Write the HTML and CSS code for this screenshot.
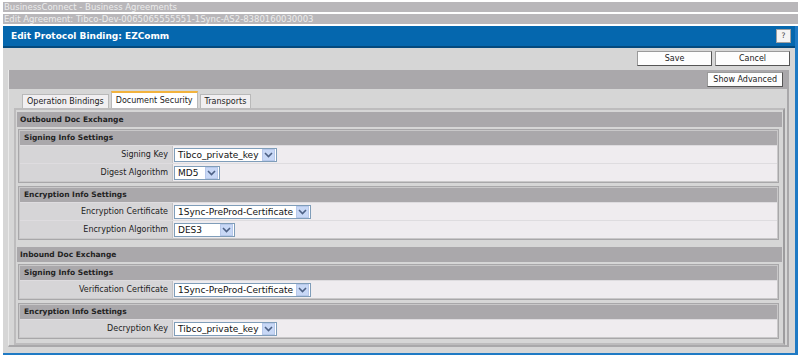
FILE: index.html
```html
<!DOCTYPE html>
<html lang="en">

<head>
    <meta charset="UTF-8">
    <title>Edit Protocol Binding</title>
    <link rel="stylesheet" href="styles.css">
</head>

<body>
    <div class="crumb">BusinessConnect - Business Agreements</div>
    <div class="crumb">Edit Agreement: Tibco-Dev-0065065555551-1Sync-AS2-8380160030003</div>

    <div class="dialog">
        <div class="titlebar">
            <span class="title">Edit Protocol Binding: EZComm</span>
            <span class="help">?</span>
        </div>

        <div class="actions">
            <span class="btn wide">Save</span>
            <span class="btn wide">Cancel</span>
        </div>

        <div class="panel">
            <div class="advbar">
                <span class="btn">Show Advanced</span>
            </div>

            <div class="tabs">
                <span class="tab">Operation Bindings</span>
                <span class="tab active">Document Security</span>
                <span class="tab">Transports</span>
            </div>

            <div class="page">
                <div class="group">
                    <div class="group-head">Outbound Doc Exchange</div>
                    <div class="group-body">
                        <div class="section">
                            <div class="section-head">Signing Info Settings</div>
                            <div class="row">
                                <div class="label">Signing Key</div>
                                <div class="value">
                                    <span class="select w-key">Tibco_private_key<span class="arrow"><svg width="9" height="6" viewBox="0 0 9 6"><path d="M1 1 L4.5 4.5 L8 1" fill="none" stroke="#4d6185" stroke-width="1.6"/></svg></span></span>
                                </div>
                            </div>
                            <div class="row">
                                <div class="label">Digest Algorithm</div>
                                <div class="value">
                                    <span class="select w-md5">MD5<span class="arrow"><svg width="9" height="6" viewBox="0 0 9 6"><path d="M1 1 L4.5 4.5 L8 1" fill="none" stroke="#4d6185" stroke-width="1.6"/></svg></span></span>
                                </div>
                            </div>
                        </div>

                        <div class="section">
                            <div class="section-head">Encryption Info Settings</div>
                            <div class="row">
                                <div class="label">Encryption Certificate</div>
                                <div class="value">
                                    <span class="select w-cert">1Sync-PreProd-Certificate<span class="arrow"><svg width="9" height="6" viewBox="0 0 9 6"><path d="M1 1 L4.5 4.5 L8 1" fill="none" stroke="#4d6185" stroke-width="1.6"/></svg></span></span>
                                </div>
                            </div>
                            <div class="row">
                                <div class="label">Encryption Algorithm</div>
                                <div class="value">
                                    <span class="select w-des">DES3<span class="arrow"><svg width="9" height="6" viewBox="0 0 9 6"><path d="M1 1 L4.5 4.5 L8 1" fill="none" stroke="#4d6185" stroke-width="1.6"/></svg></span></span>
                                </div>
                            </div>
                        </div>
                    </div>
                </div>

                <div class="group">
                    <div class="group-head">Inbound Doc Exchange</div>
                    <div class="group-body">
                        <div class="section">
                            <div class="section-head">Signing Info Settings</div>
                            <div class="row">
                                <div class="label">Verification Certificate</div>
                                <div class="value">
                                    <span class="select w-cert">1Sync-PreProd-Certificate<span class="arrow"><svg width="9" height="6" viewBox="0 0 9 6"><path d="M1 1 L4.5 4.5 L8 1" fill="none" stroke="#4d6185" stroke-width="1.6"/></svg></span></span>
                                </div>
                            </div>
                        </div>

                        <div class="section">
                            <div class="section-head">Encryption Info Settings</div>
                            <div class="row">
                                <div class="label">Decryption Key</div>
                                <div class="value">
                                    <span class="select w-key">Tibco_private_key<span class="arrow"><svg width="9" height="6" viewBox="0 0 9 6"><path d="M1 1 L4.5 4.5 L8 1" fill="none" stroke="#4d6185" stroke-width="1.6"/></svg></span></span>
                                </div>
                            </div>
                        </div>
                    </div>
                </div>
            </div>
        </div>
    </div>
</body>

</html>
```

FILE: styles.css
```css
body {
    margin: 0;
    padding-top: 2px;
    background: #ffffff;
    font-family: "DejaVu Sans", Verdana, sans-serif;
    font-size: 8px;
    color: #222;
}

.crumb {
    height: 10px;
    line-height: 10px;
    margin: 0 0 2px 3px;
    padding-left: 1px;
    background: #b9b7ba;
    color: #ececec;
    font-size: 8.5px;
    white-space: nowrap;
}

.dialog {
    margin-left: 3px;
    background: #d6d6d6;
    border-right: 3px solid #1f7ac4;
    border-bottom: 2px solid #1f7ac4;
    padding-bottom: 6px;
}

.titlebar {
    height: 20px;
    background: #0567ae;
    border-bottom: 2px solid #044a7e;
    display: flex;
    align-items: center;
    justify-content: space-between;
    padding: 0 4px 0 8px;
}

.title {
    color: #ffffff;
    font-weight: bold;
    font-size: 9px;
}

.help {
    width: 13px;
    height: 12px;
    line-height: 12px;
    text-align: center;
    background: #f4f4f4;
    border: 1px solid #a0a0a0;
    color: #444;
    font-size: 7.5px;
}

.actions {
    display: flex;
    justify-content: flex-end;
    gap: 3px;
    padding: 3px 5px 0 0;
}

.btn {
    display: inline-block;
    height: 13px;
    line-height: 13px;
    padding: 0 6px;
    background: #fdfdfd;
    border: 1px solid #9a9a9a;
    border-right-color: #555;
    border-bottom-color: #555;
    text-align: center;
    color: #222;
}

.btn.wide {
    width: 61px;
}

.panel {
    margin: 4px 6px 0 5px;
    border-right: 2px solid #a9a8aa;
    border-bottom: 2px solid #a9a8aa;
    border-left: 1px solid #e9e9e9;
}

.advbar {
    height: 19px;
    background: #aaa8ab;
    display: flex;
    align-items: center;
    justify-content: flex-end;
    padding-right: 4px;
}

.advbar .btn {
    padding: 0 5px;
}

.tabs {
    display: flex;
    align-items: flex-end;
    gap: 2px;
    height: 19px;
    padding-left: 13px;
}

.tab {
    height: 13px;
    line-height: 13px;
    padding: 0 4px;
    background: #f1eff1;
    border: 1px solid #b9b9b9;
    border-bottom: none;
    font-size: 8px;
}

.tab.active {
    height: 15px;
    line-height: 15px;
    background: #ffffff;
    border-top: 2px solid #f2b33d;
}

.page {
    margin: 0 2px 0 5px;
    border: 2px solid #bdbcbd;
    border-right-color: #9d9c9e;
    padding: 2px 1px 1px 1px;
    display: flex;
    flex-direction: column;
    gap: 4px;
}

.group-head {
    height: 15px;
    line-height: 15px;
    background: #aaa8ab;
    font-weight: bold;
    font-size: 7.5px;
    padding-left: 3px;
}

.group-body {
    display: flex;
    flex-direction: column;
    gap: 5px;
    padding: 3px 4px 4px 2px;
}

.section {
    border: 1px solid #c9c8c9;
    outline: 1px solid #a8a7a9;
}

.section-head {
    height: 14px;
    line-height: 14px;
    background: #aaa8ab;
    font-weight: bold;
    font-size: 7.5px;
    padding-left: 4px;
}

.row {
    display: flex;
    height: 17px;
    border-top: 1px solid #dedcdf;
}

.label {
    width: 148px;
    flex-shrink: 0;
    background: #d6d5d7;
    border-right: 1px solid #c4c3c5;
    text-align: right;
    line-height: 17px;
    padding-right: 4px;
}

.value {
    flex: 1;
    background: #efecef;
    display: flex;
    align-items: center;
    padding-left: 1px;
}

.select {
    display: inline-flex;
    align-items: center;
    justify-content: space-between;
    height: 14px;
    background: #ffffff;
    border: 1px solid #7f9db9;
    padding-left: 3px;
    box-sizing: border-box;
    color: #111;
    font-size: 9px;
}

.arrow {
    width: 13px;
    height: 12px;
    margin-right: 1px;
    background: #c8d8f6;
    border: 1px solid #b7c8ea;
    box-sizing: border-box;
    display: flex;
    align-items: center;
    justify-content: center;
}

.w-key { width: 103px; }
.w-md5 { width: 46px; }
.w-cert { width: 137px; }
.w-des { width: 61px; }
```
